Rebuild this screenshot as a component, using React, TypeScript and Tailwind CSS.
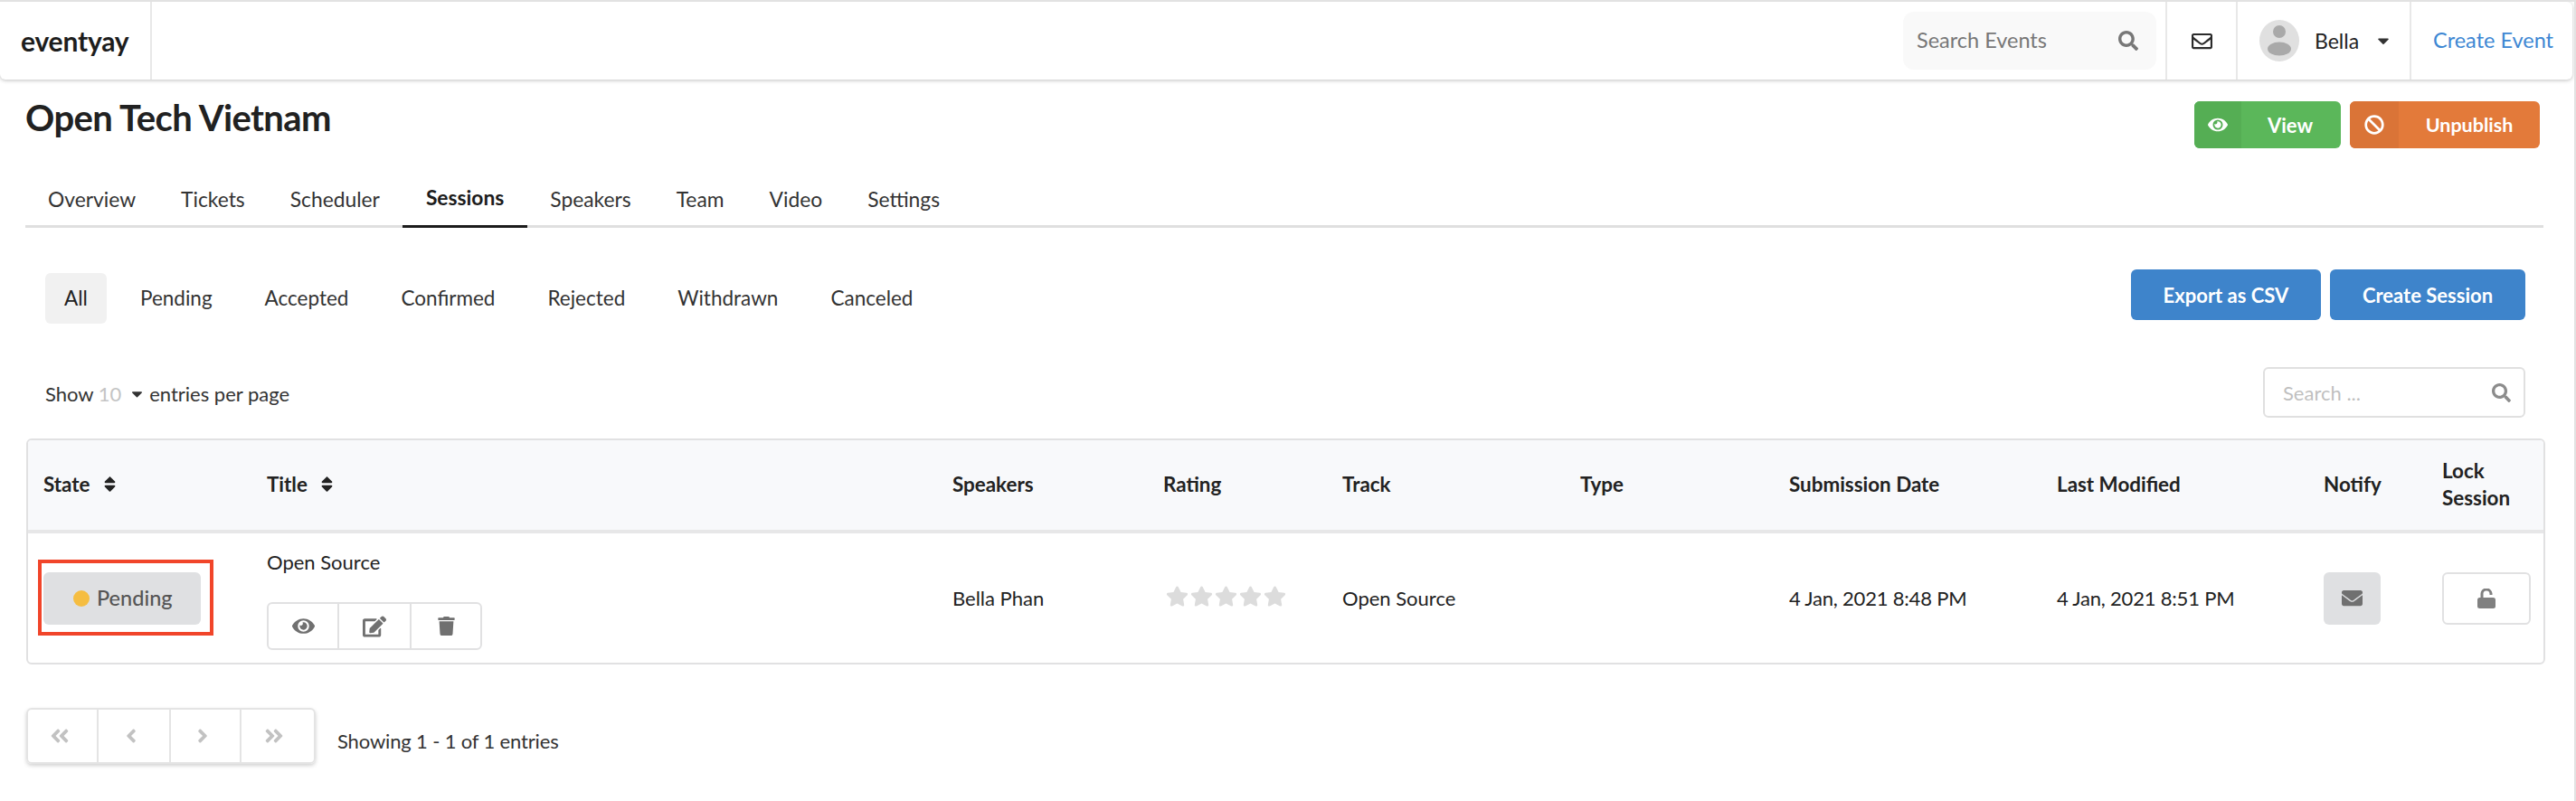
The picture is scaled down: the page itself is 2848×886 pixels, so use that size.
import React from "react";
import { FaEye, FaEdit, FaTrash, FaEnvelope, FaRegEnvelope, FaSearch, FaBan, FaStar, FaSort, FaAngleDoubleLeft, FaAngleLeft, FaAngleRight, FaAngleDoubleRight, FaCaretDown } from "react-icons/fa";

const tabs = ["Overview", "Tickets", "Scheduler", "Sessions", "Speakers", "Team", "Video", "Settings"];
const filters = ["Pending", "Accepted", "Confirmed", "Rejected", "Withdrawn", "Canceled"];
const cols = "grid grid-cols-[247px_758px_233px_198px_263px_231px_296px_295px_131px_1fr] pl-[17px]";

function Avatar() {
  return (
    <svg width="44" height="46" viewBox="0 0 44 46" className="shrink-0">
      <ellipse cx="22" cy="23" rx="22" ry="23" fill="#e0e0e0" />
      <ellipse cx="22" cy="13" rx="7" ry="7" fill="#a9a9a9" />
      <ellipse cx="22" cy="32" rx="13" ry="7.5" fill="#a9a9a9" />
    </svg>
  );
}

function OpenLock() {
  return (
    <svg width="20" height="22" viewBox="0 0 20 22">
      <path d="M5 11 V6.5 A5 5 0 0 1 15 5.5 V7" fill="none" stroke="#808080" strokeWidth="3" />
      <rect x="0" y="10" width="20" height="12" rx="2.5" fill="#808080" />
    </svg>
  );
}

export default function App() {
  return (
    <div className="w-full h-[886px] bg-white text-[#222] text-[22px] font-['Lato',sans-serif] overflow-hidden border-t-2 border-r-2 border-[#e2e2e2]">
      <header className="h-[86px] mr-[2px] rounded-b-md rounded-tr-md flex items-stretch bg-white shadow-[0_1px_4px_rgba(0,0,0,0.25)]">
        <div className="w-[168px] border-r-2 border-[#e8e8e8] flex items-center pl-[23px] text-[30px] font-bold text-[#1d1d1d] tracking-[-0.2px]">eventyay</div>
        <div className="flex-1" />
        <div className="flex items-center pr-[10px]">
          <div className="w-[280px] h-[64px] rounded-xl bg-[#f9f9f9] flex items-center justify-between pl-[15px] pr-[20px] text-[#777] text-[23.5px]">
            <span>Search Events</span>
            <FaSearch className="text-[22px] text-[#777]" />
          </div>
        </div>
        <div className="w-[78px] border-l-2 border-[#e8e8e8] flex items-center justify-center">
          <FaRegEnvelope className="text-[23px] text-[#2b2b2b]" />
        </div>
        <div className="w-[192px] border-l-2 border-[#e8e8e8] flex items-center pl-[24px]">
          <Avatar />
          <span className="ml-[17px] text-[#222] text-[23px]">Bella</span>
          <FaCaretDown className="ml-[17px] text-[20px] text-[#333]" />
        </div>
        <div className="w-[180px] border-l-2 border-[#e8e8e8] flex items-center pl-[24px] text-[#3d87d3] text-[23.5px]">Create Event</div>
      </header>

      <main className="pl-[28px] pr-[34px]">
        <div className="flex items-start justify-between h-[112px] pt-[24px] pr-[4px]">
          <h1 className="text-[40px] font-bold leading-[40px] text-[#212121] -mt-[2px] tracking-[-0.6px]">Open Tech Vietnam</h1>
          <div className="flex gap-[10px] text-white font-bold text-[22px]">
            <div className="w-[162px] h-[52px] rounded-md bg-[#5bb75a] flex overflow-hidden">
              <span className="w-[52px] bg-[#55ae54] flex items-center justify-center"><FaEye className="text-[22px]" /></span>
              <span className="flex-1 flex items-center justify-center pr-[2px]">View</span>
            </div>
            <div className="w-[210px] h-[52px] rounded-md bg-[#e37a3a] flex overflow-hidden">
              <span className="w-[54px] bg-[#da7437] flex items-center justify-center"><FaBan className="text-[22px]" /></span>
              <span className="flex-1 flex items-center justify-center text-[21.5px]">Unpublish</span>
            </div>
          </div>
        </div>

        <nav className="h-[52px] border-b-[3px] border-[#dfdfdf] flex text-[22.8px]">
          {tabs.map((t) => (
            <div key={t} className={t === "Sessions" ? "h-[52px] pb-[12px] px-[26px] flex items-center font-bold text-[#1c1c1c] border-b-[3px] border-[#1c1c1c]" : "h-[52px] pb-[12px] px-[25px] flex items-center text-[#333]"}>{t}</div>
          ))}
        </nav>

        <div className="flex items-start justify-between mt-[46px] pr-[20px] h-[60px]">
          <div className="flex items-center pl-[22px] h-[56px] mt-[4px] text-[22.5px]">
            <div className="w-[68px] h-[56px] rounded-md bg-[#f1f1f1] flex items-center justify-center mr-[8px]">All</div>
            {filters.map((f) => (
              <div key={f} className="h-[56px] px-[29px] flex items-center text-[#333]">{f}</div>
            ))}
          </div>
          <div className="flex gap-[10px] text-white font-bold text-[22px]">
            <div className="w-[210px] h-[56px] rounded-md bg-[#3e84cb] flex items-center justify-center">Export as CSV</div>
            <div className="w-[216px] h-[56px] rounded-md bg-[#3e84cb] flex items-center justify-center">Create Session</div>
          </div>
        </div>

        <div className="flex items-center justify-between mt-[48px] pl-[22px] pr-[20px] h-[56px]">
          <div className="flex items-center text-[#333] pt-[2px]">
            <span>Show</span>
            <span className="ml-[5px] text-[#c4c4c4]">10</span>
            <FaCaretDown className="ml-[8px] text-[19px] text-[#333]" />
            <span className="ml-[4px]">entries per page</span>
          </div>
          <div className="w-[290px] h-[56px] rounded-md border-2 border-[#e0e0e0] flex items-center justify-between pl-[20px] pr-[14px] text-[#bfbfbf] text-[22px]">
            <span>Search ...</span>
            <FaSearch className="text-[21px] text-[#8c8c8c]" />
          </div>
        </div>

        <div className="mt-[23px] ml-[1px] w-[2785px] border-2 border-[#e1e1e2] rounded-md overflow-hidden">
          <div className={`${cols} h-[103px] pb-[2px] bg-[#f8f9fb] border-b-4 border-[#e7e7e8] font-bold text-[#222] items-center text-[22.4px]`}>
            <div className="flex items-center gap-[11px]">State <FaSort className="text-[21px]" /></div>
            <div className="flex items-center gap-[11px]">Title <FaSort className="text-[21px]" /></div>
            <div>Speakers</div>
            <div>Rating</div>
            <div>Track</div>
            <div>Type</div>
            <div>Submission Date</div>
            <div>Last Modified</div>
            <div>Notify</div>
            <div className="leading-[30px]">Lock<br />Session</div>
          </div>
          <div className={`${cols} h-[143px] items-center text-[#222]`}>
            <div className="relative w-[174px] h-[58px] rounded-md bg-[#dfe0e2] flex items-center pl-[33px] text-[#555] text-[23.5px] font-medium">
              <span className="w-[18px] h-[18px] rounded-full bg-[#f5bd41] mr-[8px]" />
              Pending
              <span className="absolute -left-[6px] -top-[14px] w-[194px] h-[84px] border-4 border-[#f1452a]" />
            </div>
            <div className="flex flex-col items-start gap-[30px] mt-[4px]">
              <span className="leading-[28px]">Open Source</span>
              <div className="w-[238px] h-[53px] border-2 border-[#e1e1e2] rounded-md flex text-[#707070]">
                <span className="w-[78px] border-r-2 border-[#e1e1e2] flex items-center justify-center"><FaEye className="text-[25px]" /></span>
                <span className="w-[80px] border-r-2 border-[#e1e1e2] flex items-center justify-center"><FaEdit className="text-[26px]" /></span>
                <span className="flex-1 flex items-center justify-center"><FaTrash className="text-[21px]" /></span>
              </div>
            </div>
            <div>Bella Phan</div>
            <div className="flex gap-[2px] text-[#dcdcdc] pl-[3px] -mt-[4px]">
              {[0, 1, 2, 3, 4].map((i) => <FaStar key={i} className="text-[25px]" />)}
            </div>
            <div>Open Source</div>
            <div />
            <div className="tracking-[-0.2px]">4 Jan, 2021 8:48 PM</div>
            <div className="tracking-[-0.2px]">4 Jan, 2021 8:51 PM</div>
            <div className="w-[63px] h-[58px] rounded-md bg-[#dfe0e2] flex items-center justify-center text-[#707070]"><FaEnvelope className="text-[23px]" /></div>
            <div className="w-[98px] h-[58px] rounded-md border-2 border-[#e1e1e2] flex items-center justify-center"><OpenLock /></div>
          </div>
        </div>

        <div className="flex items-center mt-[48px] ml-[1px]">
          <div className="w-[320px] h-[62px] border-2 border-[#e4e4e4] rounded-md flex text-[#c2c2c2] shadow-[0_2px_4px_rgba(0,0,0,0.18)] text-[24px]">
            <span className="w-[78px] pr-[6px] border-r-2 border-[#e4e4e4] flex items-center justify-center"><FaAngleDoubleLeft /></span>
            <span className="w-[80px] pr-[7px] border-r-2 border-[#e4e4e4] flex items-center justify-center"><FaAngleLeft /></span>
            <span className="w-[78px] pr-[7px] border-r-2 border-[#e4e4e4] flex items-center justify-center"><FaAngleRight /></span>
            <span className="flex-1 pr-[8px] flex items-center justify-center"><FaAngleDoubleRight /></span>
          </div>
          <span className="ml-[24px] pt-[10px] text-[#333] tracking-[-0.15px]">Showing 1 - 1 of 1 entries</span>
        </div>
      </main>
    </div>
  );
}
